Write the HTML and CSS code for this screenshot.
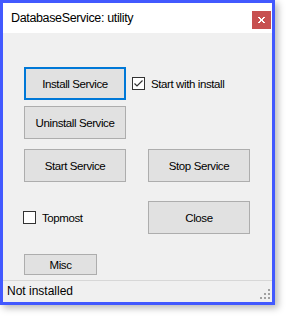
FILE: index.html
```html
<!DOCTYPE html>
<html>
<head>
<meta charset="utf-8">
<link rel="stylesheet" href="styles.css">
</head>
<body>
<div class="window">
  <div class="titlebar">
    <span class="title">DatabaseService: utility</span>
    <span class="close-x">
      <svg width="7" height="6" viewBox="0 0 7 6" shape-rendering="crispEdges">
        <rect x="0" y="0" width="2" height="1" fill="#fff"/>
        <rect x="5" y="0" width="2" height="1" fill="#fff"/>
        <rect x="1" y="1" width="2" height="1" fill="#fff"/>
        <rect x="4" y="1" width="2" height="1" fill="#fff"/>
        <rect x="2" y="2" width="3" height="2" fill="#fff"/>
        <rect x="1" y="4" width="2" height="1" fill="#fff"/>
        <rect x="4" y="4" width="2" height="1" fill="#fff"/>
        <rect x="0" y="5" width="2" height="1" fill="#fff"/>
        <rect x="5" y="5" width="2" height="1" fill="#fff"/>
      </svg>
    </span>
  </div>
  <div class="client">
    <div class="row r1">
      <button class="btn default">Install Service</button>
      <label class="check">
        <span class="box">
          <svg width="11" height="11" viewBox="0 0 11 11"><polyline points="1.5,5.5 4,8 9.5,2.5" fill="none" stroke="#333" stroke-width="1.2"/></svg>
        </span>
        <span class="lbl">Start with install</span>
      </label>
    </div>
    <div class="row r2">
      <button class="btn">Uninstall Service</button>
    </div>
    <div class="row r3">
      <button class="btn">Start Service</button>
      <button class="btn col2">Stop Service</button>
    </div>
    <div class="row r4">
      <label class="check topmost">
        <span class="box"></span>
        <span class="lbl">Topmost</span>
      </label>
      <button class="btn col2b">Close</button>
    </div>
    <div class="row r5">
      <button class="btn misc">Misc</button>
    </div>
  </div>
  <div class="status">
    <span class="status-text">Not installed</span>
    <svg class="grip" width="10" height="10" viewBox="0 0 10 10" shape-rendering="crispEdges">
      <rect x="8" y="0" width="2" height="2" fill="#a0a0a0"/>
      <rect x="4" y="4" width="2" height="2" fill="#a0a0a0"/>
      <rect x="8" y="4" width="2" height="2" fill="#a0a0a0"/>
      <rect x="0" y="8" width="2" height="2" fill="#a0a0a0"/>
      <rect x="4" y="8" width="2" height="2" fill="#a0a0a0"/>
      <rect x="8" y="8" width="2" height="2" fill="#a0a0a0"/>
    </svg>
  </div>
</div>
</body>
</html>
```
FILE: styles.css
```css
html, body {
  margin: 0;
  padding: 0;
  background: #ffffff;
}
body {
  width: 286px;
  height: 316px;
  overflow: hidden;
  font-family: "Liberation Sans", Arial, sans-serif;
}
.window {
  box-sizing: border-box;
  width: 275px;
  height: 305px;
  border: 3px solid #4259ff;
  background: #f0f0f0;
  display: flex;
  flex-direction: column;
  box-shadow: 3px 3px 7px rgba(0, 0, 0, 0.28);
}
.titlebar {
  height: 30px;
  background: #ffffff;
  display: flex;
  justify-content: space-between;
  align-items: flex-start;
  flex: none;
}
.title {
  font-size: 12.5px;
  letter-spacing: -0.35px;
  line-height: 30px;
  padding-left: 8px;
  color: #000;
}
.close-x {
  width: 19px;
  height: 18px;
  margin-top: 8px;
  margin-right: 1px;
  background: #c75050;
  display: flex;
  align-items: center;
  justify-content: center;
}
.client {
  flex: 1;
  padding-left: 21px;
  padding-top: 34px;
}
.row {
  display: flex;
  align-items: center;
}
.r2 { margin-top: 6px; }
.r3 { margin-top: 10px; }
.r4 { margin-top: 19px; }
.r5 { margin-top: 20px; }
.btn {
  box-sizing: border-box;
  width: 102px;
  height: 33px;
  margin: 0;
  padding: 0;
  border: 1px solid #adadad;
  background: #e1e1e1;
  font-family: "Liberation Sans", Arial, sans-serif;
  font-size: 11.5px;
  letter-spacing: -0.4px;
  color: #000;
}
.btn.default {
  border: 2px solid #0078d7;
}
.col2 { margin-left: 22px; }
.col2b { margin-left: 22px; }
.btn.misc {
  width: 73px;
  height: 21px;
}
.check {
  display: flex;
  align-items: center;
  font-size: 11.5px;
  letter-spacing: -0.4px;
  color: #000;
  margin-left: 6px;
}
.box {
  box-sizing: border-box;
  width: 13px;
  height: 13px;
  border: 1px solid #333;
  background: #fff;
  display: flex;
  align-items: center;
  justify-content: center;
}
.lbl { margin-left: 6px; }
.topmost {
  margin-left: -1px;
  width: 103px;
}
.status {
  flex: none;
  height: 21px;
  border-top: 1px solid #d7d7d7;
  display: flex;
  justify-content: space-between;
  align-items: flex-end;
}
.status-text {
  font-size: 12px;
  line-height: 21px;
  padding-left: 4px;
  align-self: center;
  color: #000;
}
.grip {
  margin-right: 2px;
  margin-bottom: 3px;
}
```
